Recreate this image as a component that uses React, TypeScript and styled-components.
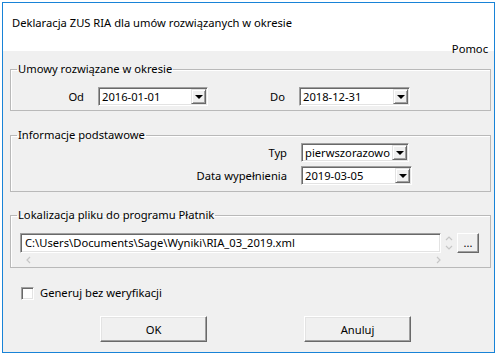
import React from "react";
import styled, { createGlobalStyle } from "styled-components";

const GlobalStyle = createGlobalStyle`
  html, body {
    margin: 0;
    padding: 0;
    background: #ffffff;
  }
  body {
    font-family: "Noto Sans", "Segoe UI", sans-serif;
    font-size: 11.2px;
    color: #000000;
  }
`;

type ComboProps = {
  value: string;
  width: number;
};

const Combo: React.FC<ComboProps> = ({ value, width }) => {
  return (
    <ComboBox $width={width}>
      <ComboText>{value}</ComboText>
      <DropButton>
        <Triangle />
      </DropButton>
    </ComboBox>
  );
};

const Chevron: React.FC<{ dir: "left" | "right" | "up" | "down" }> = ({ dir }) => {
  const paths = {
    left: "M5 1 L2 4 L5 7",
    right: "M2 1 L5 4 L2 7",
    up: "M1 5 L4 2 L7 5",
    down: "M1 2 L4 5 L7 2",
  };
  return (
    <svg width="8" height="8" viewBox="0 0 8 8">
      <path d={paths[dir]} fill="none" stroke="#c6c6c6" strokeWidth="1.2" />
    </svg>
  );
};

export default function App() {
  return (
    <>
      <GlobalStyle />
      <Window>
        <Header>
          <Title>Deklaracja ZUS RIA dla umów rozwiązanych w okresie</Title>
          <MenuBar>
            <MenuItem>Pomoc</MenuItem>
          </MenuBar>
        </Header>
        <Body>
          <Group $gap={16}>
            <Legend>Umowy rozwiązane w okresie</Legend>
            <Row $top={10} $bottom={4}>
              <Label $width={73}>Od</Label>
              <Combo value="2016-01-01" width={110} />
              <Label $width={77}>Do</Label>
              <Combo value="2018-12-31" width={111} />
            </Row>
          </Group>

          <Group $gap={15}>
            <Legend>Informacje podstawowe</Legend>
            <Stack>
              <Row $top={0} $bottom={0}>
                <Label $width={276}>Typ</Label>
                <Combo value="pierwszorazowo" width={108} />
              </Row>
              <Row $top={0} $bottom={0}>
                <Label $width={276}>Data wypełnienia</Label>
                <Combo value="2019-03-05" width={111} />
              </Row>
            </Stack>
          </Group>

          <Group $gap={0}>
            <Legend>Lokalizacja pliku do programu Płatnik</Legend>
            <PathArea>
              <PathRow>
                <PathInput>C:\Users\Documents\Sage\Wyniki\RIA_03_2019.xml</PathInput>
                <Spinner>
                  <Chevron dir="up" />
                  <Chevron dir="down" />
                </Spinner>
                <BrowseButton>...</BrowseButton>
              </PathRow>
              <ScrollRow>
                <Chevron dir="left" />
                <Chevron dir="right" />
              </ScrollRow>
            </PathArea>
          </Group>

          <CheckRow>
            <CheckBox />
            <span>Generuj bez weryfikacji</span>
          </CheckRow>

          <ButtonRow>
            <DialogButton>OK</DialogButton>
            <DialogButton>Anuluj</DialogButton>
          </ButtonRow>
        </Body>
      </Window>
    </>
  );
}

const Window = styled.div`
  margin: 2px 0 0 2px;
  width: 491px;
  height: 349px;
  border: 1px solid #1883d7;
  background: #f0f0f0;
  display: flex;
  flex-direction: column;
`;

const Header = styled.div`
  background: #ffffff;
  height: 48px;
  flex-shrink: 0;
  display: flex;
  flex-direction: column;
`;

const Title = styled.div`
  padding: 12px 0 0 9px;
  line-height: 16px;
`;

const MenuBar = styled.div`
  margin-top: auto;
  margin-bottom: -4px;
  display: flex;
  justify-content: flex-end;
  padding: 0 6px 0 0;
`;

const MenuItem = styled.span`
  line-height: 12px;
`;

const Body = styled.div`
  flex: 1;
  display: flex;
  flex-direction: column;
  padding: 10px 3px 0 7px;
`;

const Group = styled.fieldset<{ $gap: number }>`
  margin: 0 0 ${(p) => p.$gap}px 0;
  padding: 0;
  border: 1px solid #b9b9b9;
  box-shadow: 1px 1px 0 #ffffff inset;
  min-width: 0;
`;

const Legend = styled.legend`
  margin-left: 6px;
  padding: 0 1px;
  line-height: 16px;
`;

const Row = styled.div<{ $top: number; $bottom: number }>`
  display: flex;
  align-items: center;
  padding: ${(p) => p.$top}px 0 ${(p) => p.$bottom}px 0;
`;

const Stack = styled.div`
  display: flex;
  flex-direction: column;
  gap: 4px;
  padding-bottom: 6px;
`;

const Label = styled.span<{ $width: number }>`
  width: ${(p) => p.$width}px;
  text-align: right;
  margin-right: 14px;
  flex-shrink: 0;
`;

const ComboBox = styled.div<{ $width: number }>`
  width: ${(p) => p.$width}px;
  height: 19px;
  box-sizing: border-box;
  padding: 1px;
  background: #ffffff;
  border-style: solid;
  border-width: 1px;
  border-color: #a0a0a0 #ffffff #ffffff #a0a0a0;
  box-shadow: inset 1px 1px 0 #696969, inset -1px -1px 0 #e3e3e3;
  display: flex;
  align-items: stretch;
  flex-shrink: 0;
`;

const ComboText = styled.span`
  flex: 1;
  padding-left: 2px;
  line-height: 15px;
  white-space: nowrap;
  overflow: hidden;
`;

const DropButton = styled.div`
  width: 15px;
  box-sizing: border-box;
  background: #f0f0f0;
  border-style: solid;
  border-width: 1px;
  border-color: #e3e3e3 #696969 #696969 #e3e3e3;
  box-shadow: inset 1px 1px 0 #ffffff, inset -1px -1px 0 #a0a0a0;
  display: flex;
  align-items: center;
  justify-content: center;
`;

const Triangle = styled.div`
  width: 0;
  height: 0;
  border-left: 4px solid transparent;
  border-right: 4px solid transparent;
  border-top: 4px solid #000000;
  margin-top: 1px;
`;

const PathArea = styled.div`
  padding: 10px 0 1px 9px;
`;

const PathRow = styled.div`
  display: flex;
  align-items: center;
`;

const PathInput = styled.div`
  width: 421px;
  height: 20px;
  box-sizing: border-box;
  background: #ffffff;
  border-style: solid;
  border-width: 1px;
  border-color: #a0a0a0 #ffffff #ffffff #a0a0a0;
  box-shadow: inset 1px 1px 0 #696969, inset -1px -1px 0 #e3e3e3;
  padding-left: 4px;
  line-height: 17px;
  white-space: nowrap;
  overflow: hidden;
`;

const Spinner = styled.div`
  width: 16px;
  display: flex;
  flex-direction: column;
  align-items: center;
  gap: 1px;
`;

const BrowseButton = styled.div`
  width: 22px;
  height: 20px;
  box-sizing: border-box;
  background: #f0f0f0;
  border-style: solid;
  border-width: 1px;
  border-color: #ffffff #696969 #696969 #ffffff;
  box-shadow: inset -1px -1px 0 #a0a0a0;
  display: flex;
  align-items: center;
  justify-content: center;
  line-height: 14px;
  font-size: 11px;
`;

const ScrollRow = styled.div`
  width: 418px;
  display: flex;
  justify-content: space-between;
  padding: 1px 0 0 5px;
  height: 12px;
  align-items: center;
`;

const CheckRow = styled.div`
  display: flex;
  align-items: center;
  gap: 6px;
  padding: 17px 0 0 11px;
  line-height: 16px;
`;

const CheckBox = styled.div`
  width: 13px;
  height: 13px;
  box-sizing: border-box;
  background: #ffffff;
  border-style: solid;
  border-width: 1px;
  border-color: #a0a0a0 #ffffff #ffffff #a0a0a0;
  box-shadow: inset 1px 1px 0 #696969, inset -1px -1px 0 #e3e3e3;
`;

const ButtonRow = styled.div`
  display: flex;
  gap: 97px;
  padding: 15px 0 0 90px;
`;

const DialogButton = styled.div`
  width: 107px;
  height: 26px;
  box-sizing: border-box;
  background: #f0f0f0;
  border-style: solid;
  border-width: 1px;
  border-color: #ffffff #696969 #696969 #ffffff;
  box-shadow: inset -1px -1px 0 #a0a0a0, inset 1px 1px 0 #e3e3e3;
  display: flex;
  align-items: center;
  justify-content: center;
`;
